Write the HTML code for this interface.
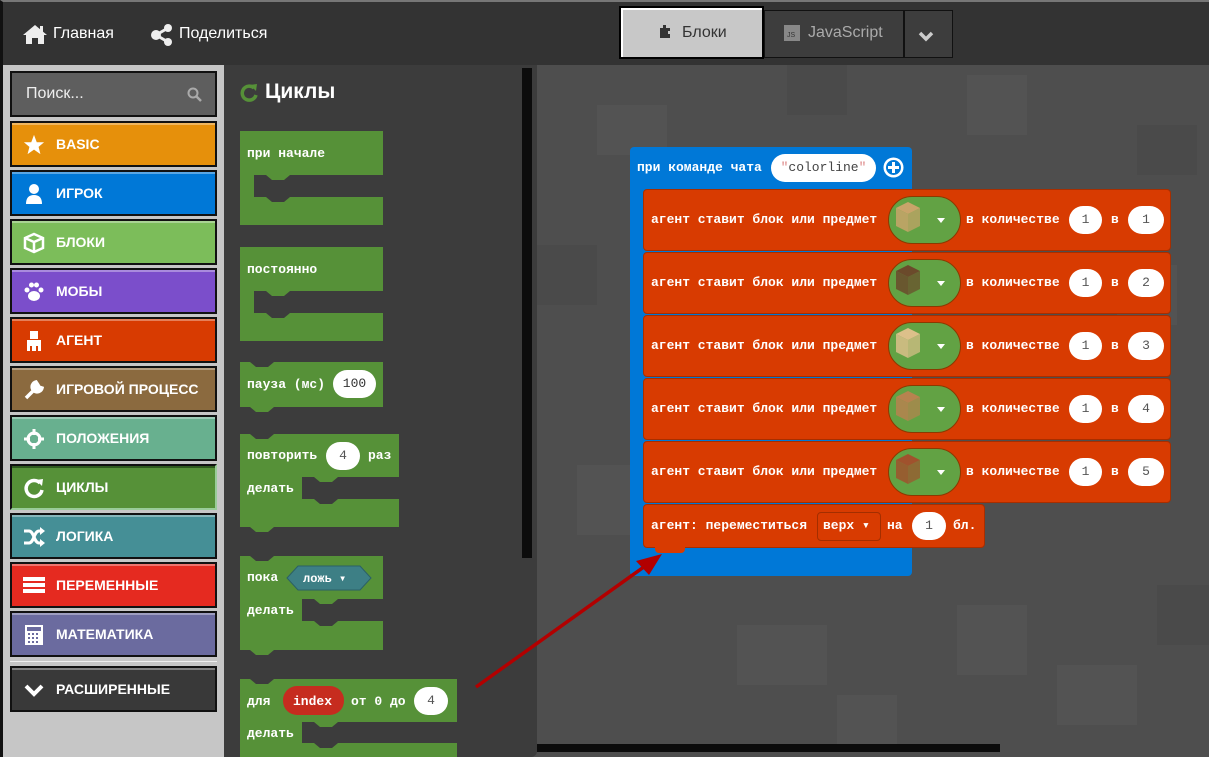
<!DOCTYPE html>
<html><head><meta charset="utf-8">
<style>
*{box-sizing:border-box;margin:0;padding:0}
body{width:1209px;height:757px;overflow:hidden;background:#4e4e4e;font-family:"Liberation Sans",sans-serif;position:relative}
.abs{position:absolute}
#top{left:0;top:0;width:1209px;height:65px;background:#333;border-top:2px solid #777;border-left:3px solid #111}
.nav{color:#fff;font-size:16px;top:23px}
#side{left:0;top:65px;width:224px;height:692px;background:#c6c6c6;border-left:3px solid #111}
.cat{position:absolute;left:10px;width:207px;height:46px;border:2px solid #111;color:#fff;font-weight:bold;font-size:14px;line-height:42px;padding-left:44px;box-shadow:inset 0 2px 0 rgba(255,255,255,.35)}
.cat svg{position:absolute;left:11px;top:11px}
#fly{left:224px;top:65px;width:313px;height:692px;background:#3c3c3c;border-radius:0 0 6px 0}
.mono{font-family:"Liberation Mono",monospace;font-weight:bold;font-size:13px;color:#fff}
.row{position:absolute;left:643px;width:528px;height:62px;background:#d83b01;border:1px solid #a72e00;border-radius:4px}
.row .t{position:absolute;top:22px}
.pill{position:absolute;background:#fff;border-radius:14px;color:#555;text-align:center;font-family:"Liberation Mono",monospace;font-size:13px}
.gp{position:absolute;left:244px;top:6px;width:73px;height:48px;background:#62a244;border:1px solid #8a3a00;border-radius:24px}
</style></head><body>

<svg class="abs" style="left:537px;top:65px" width="672" height="692">
<g fill="#535353">
<rect x="60" y="40" width="70" height="50"/><rect x="430" y="10" width="60" height="60"/><rect x="200" y="560" width="90" height="60"/>
<rect x="420" y="540" width="70" height="70"/><rect x="580" y="200" width="60" height="60"/><rect x="40" y="400" width="60" height="70"/>
<rect x="520" y="600" width="80" height="60"/><rect x="300" y="630" width="60" height="50"/></g>
<g fill="#4a4a4a"><rect x="0" y="180" width="60" height="60"/><rect x="620" y="520" width="52" height="60"/><rect x="250" y="0" width="60" height="50"/><rect x="600" y="60" width="60" height="50"/></g>
</svg>

<div id="top" class="abs">
  <svg class="abs" style="left:19px;top:21px" width="26" height="22" viewBox="0 0 26 22"><path d="M13 2 L1 12 L4 12 L4 21 L10 21 L10 15 L16 15 L16 21 L22 21 L22 12 L25 12 Z" fill="#eee"/><rect x="18" y="3" width="3" height="6" fill="#eee"/></svg>
  <div class="abs nav" style="left:50px">Главная</div>
  <svg class="abs" style="left:147px;top:22px" width="24" height="22" viewBox="0 0 24 22"><circle cx="18" cy="4" r="4" fill="#eee"/><circle cx="6" cy="11" r="5" fill="#eee"/><circle cx="18" cy="18" r="4" fill="#eee"/><path d="M6 11 L18 4 M6 11 L18 18" stroke="#eee" stroke-width="3"/></svg>
  <div class="abs nav" style="left:176px">Поделиться</div>
  <div class="abs" style="left:616px;top:4px;width:145px;height:53px;background:#c8c8c8;border:2px solid #000;box-shadow:inset 2px 2px 0 #fff"></div>
  <svg class="abs" style="left:656px;top:23px" width="12" height="13"><path d="M1 3 h3 v-3 h3 v3 h4 v3 h-2 v3 h2 v4 h-10z" fill="#333"/></svg>
  <div class="abs" style="left:679px;top:22px;font-size:16px;color:#333">Блоки</div>
  <div class="abs" style="left:761px;top:8px;width:140px;height:48px;background:#3d3d3d;border:1px solid #111"></div>
  <div class="abs" style="left:781px;top:23px;width:16px;height:16px;background:#888;color:#333;font-size:7px;padding:7px 0 0 3px">JS</div>
  <div class="abs" style="left:805px;top:22px;font-size:16px;color:#aaa">JavaScript</div>
  <div class="abs" style="left:901px;top:8px;width:49px;height:48px;background:#3d3d3d;border:1px solid #111"></div>
  <svg class="abs" style="left:915px;top:29px" width="16" height="11"><path d="M2 2 L8 8 L14 2" stroke="#ccc" stroke-width="3.5" fill="none"/></svg>
</div>

<div id="side" class="abs">
  <div class="abs" style="left:7px;top:6px;width:207px;height:46px;background:#5e5e5e;border:2px solid #111;color:#eee;font-size:16px;line-height:42px;padding-left:14px">Поиск...</div>
  <svg class="abs" style="left:184px;top:22px" width="16" height="16"><circle cx="6" cy="6" r="4.5" stroke="#aaa" stroke-width="2" fill="none"/><path d="M9.5 9.5 L14 14" stroke="#aaa" stroke-width="2.5"/></svg>
</div>
<div class="cat" style="top:121px;background:#e6900b">BASIC<svg width="22" height="22" viewBox="0 0 24 24"><path d="M12 1 L15 9 L23 9 L17 14 L19 22 L12 17 L5 22 L7 14 L1 9 L9 9Z" fill="#fff"/></svg></div>
<div class="cat" style="top:170px;background:#0078d7">ИГРОК<svg width="22" height="22"><circle cx="11" cy="6" r="5" fill="#fff"/><path d="M3 21 Q3 12 11 12 Q19 12 19 21Z" fill="#fff"/></svg></div>
<div class="cat" style="top:219px;background:#7cbd5a">БЛОКИ<svg width="22" height="22"><path d="M11 2 L20 6 L20 16 L11 20 L2 16 L2 6Z M2 6 L11 10 L20 6 M11 10 L11 20" stroke="#fff" stroke-width="2.5" fill="none"/></svg></div>
<div class="cat" style="top:268px;background:#7b4ecb">МОБЫ<svg width="22" height="22"><circle cx="4" cy="9" r="2.5" fill="#fff"/><circle cx="8.5" cy="4" r="2.5" fill="#fff"/><circle cx="13.5" cy="4" r="2.5" fill="#fff"/><circle cx="18" cy="9" r="2.5" fill="#fff"/><ellipse cx="11" cy="15" rx="6" ry="5" fill="#fff"/></svg></div>
<div class="cat" style="top:317px;background:#d83b01">АГЕНТ<svg width="22" height="22"><rect x="7" y="1" width="8" height="8" fill="#fff"/><rect x="4" y="10" width="14" height="6" fill="#fff"/><rect x="4" y="16" width="3" height="5" fill="#fff"/><rect x="15" y="16" width="3" height="5" fill="#fff"/><rect x="9" y="16" width="4" height="5" fill="#fff"/></svg></div>
<div class="cat" style="top:366px;background:#8b6a3f">ИГРОВОЙ ПРОЦЕСС<svg width="22" height="22"><path d="M3 19 L12 10 M13 3 a5 5 0 1 0 6 6 l-3 -1 l-1 -2 Z" stroke="#fff" stroke-width="3.5" fill="#fff"/></svg></div>
<div class="cat" style="top:415px;background:#68b08f">ПОЛОЖЕНИЯ<svg width="22" height="22"><circle cx="11" cy="11" r="6" stroke="#fff" stroke-width="3" fill="none"/><path d="M11 1 V7 M11 15 V21 M1 11 H7 M15 11 H21" stroke="#fff" stroke-width="3"/></svg></div>
<div class="cat" style="top:464px;background:#569138;box-shadow:inset 0 2px 0 #2f5a1e;border-right-color:#9c9;border-bottom-color:#9c9">ЦИКЛЫ<svg width="22" height="22"><path d="M17 6 A8 8 0 1 0 19 13" stroke="#fff" stroke-width="3.5" fill="none"/><path d="M13 3 L20 2 L19 9Z" fill="#fff"/></svg></div>
<div class="cat" style="top:513px;background:#458f96">ЛОГИКА<svg width="22" height="22"><path d="M1 5 H6 C11 5 11 17 16 17 H19 M1 17 H6 C11 17 11 5 16 5 H19" stroke="#fff" stroke-width="3" fill="none"/><path d="M17 1 L22 5 L17 9Z M17 13 L22 17 L17 21Z" fill="#fff"/></svg></div>
<div class="cat" style="top:562px;background:#e52a20">ПЕРЕМЕННЫЕ<svg width="22" height="22"><rect x="0" y="2" width="22" height="4" fill="#fff"/><rect x="0" y="8" width="22" height="4" fill="#fff"/><rect x="0" y="14" width="22" height="4" fill="#fff"/></svg></div>
<div class="cat" style="top:611px;background:#6b6b9f">МАТЕМАТИКА<svg width="22" height="22"><rect x="2" y="1" width="18" height="20" fill="#fff"/><rect x="4" y="3" width="14" height="4" fill="#6b6b9f"/><g fill="#6b6b9f"><rect x="5" y="9" width="2" height="2"/><rect x="9" y="9" width="2" height="2"/><rect x="13" y="9" width="2" height="2"/><rect x="5" y="13" width="2" height="2"/><rect x="9" y="13" width="2" height="2"/><rect x="13" y="13" width="2" height="2"/><rect x="5" y="17" width="2" height="2"/><rect x="9" y="17" width="2" height="2"/><rect x="13" y="17" width="2" height="2"/></g></svg></div>
<div class="abs" style="left:10px;top:661px;width:207px;height:1px;background:#eee"></div>
<div class="cat" style="top:666px;background:#393939">РАСШИРЕННЫЕ<svg width="22" height="22"><path d="M3 7 L11 15 L19 7" stroke="#fff" stroke-width="4" fill="none"/></svg></div>

<div id="fly" class="abs"></div>
<svg class="abs" style="left:240px;top:83px" width="20" height="20"><path d="M14 5 A7 7 0 1 0 16 12" stroke="#569138" stroke-width="3.5" fill="none"/><path d="M10 2 L17 1 L16 8Z" fill="#569138"/></svg>
<div class="abs" style="left:265px;top:80px;color:#fff;font-weight:bold;font-size:21px">Циклы</div>
<div class="abs" style="left:522px;top:68px;width:10px;height:490px;background:#0c0c0c"></div>
<div class="abs" style="left:537px;top:744px;width:463px;height:8px;background:#0c0c0c"></div>

<svg class="abs" style="left:0;top:0" width="540" height="757">
<g fill="#569138">
 <path d="M240 131 H383 V175 H290 l-6 5 h-12 l-6 -5 H254 V197 H266 l6 5 h12 l6 -5 H383 V225 H240 Z"/>
 <path d="M240 247 H383 V291 H290 l-6 5 h-12 l-6 -5 H254 V313 H266 l6 5 h12 l6 -5 H383 V341 H240 Z"/>
 <path d="M240 362 H250 l6 5 h12 l6 -5 H383 V407 H274 l-6 5 h-12 l-6 -5 H240 Z"/>
 <path d="M240 434 H250 l6 5 h12 l6 -5 H399 V477 H338 l-6 5 h-12 l-6 -5 H302 V499 H314 l6 5 h12 l6 -5 H399 V527 H274 l-6 5 h-12 l-6 -5 H240 Z"/>
 <path d="M240 556 H250 l6 5 h12 l6 -5 H383 V599 H338 l-6 5 h-12 l-6 -5 H302 V621 H314 l6 5 h12 l6 -5 H383 V650 H274 l-6 5 h-12 l-6 -5 H240 Z"/>
 <path d="M240 679 H250 l6 5 h12 l6 -5 H457 V722 H338 l-6 5 h-12 l-6 -5 H302 V743 H314 l6 5 h12 l6 -5 H457 V757 H240 Z"/>
</g>
<polygon points="287,578 298,566 360,566 371,578 360,590 298,590" fill="#3d7f85" stroke="#2b6066"/>
<rect x="283" y="686" width="61" height="29" rx="14" fill="#c62c1f"/>
</svg>
<div class="abs mono" style="left:247px;top:146px">при начале</div>
<div class="abs mono" style="left:247px;top:262px">постоянно</div>
<div class="abs mono" style="left:247px;top:377px">пауза (мс)</div>
<div class="pill" style="left:333px;top:370px;width:43px;height:28px;line-height:28px;color:#333">100</div>
<div class="abs mono" style="left:247px;top:448px">повторить</div>
<div class="pill" style="left:326px;top:442px;width:34px;height:28px;line-height:28px">4</div>
<div class="abs mono" style="left:368px;top:448px">раз</div>
<div class="abs mono" style="left:247px;top:481px">делать</div>
<div class="abs mono" style="left:247px;top:570px">пока</div>
<div class="abs mono" style="left:303px;top:571px;font-size:12px">ложь ▾</div>
<div class="abs mono" style="left:247px;top:603px">делать</div>
<div class="abs mono" style="left:247px;top:694px">для</div>
<div class="abs mono" style="left:293px;top:694px">index</div>
<div class="abs mono" style="left:351px;top:694px">от 0 до</div>
<div class="pill" style="left:414px;top:687px;width:34px;height:28px;line-height:28px">4</div>
<div class="abs mono" style="left:247px;top:726px">делать</div>

<div class="abs" style="left:630px;top:147px;width:282px;height:429px;background:#0078d7;border-radius:4px"></div>
<div class="abs mono" style="left:637px;top:160px">при команде чата</div>
<div class="pill" style="left:771px;top:154px;width:105px;height:28px;line-height:27px;color:#444"><span style="color:#d88">"</span>colorline<span style="color:#d88">"</span></div>
<svg class="abs" style="left:882px;top:156px" width="23" height="23"><circle cx="11.5" cy="11.5" r="10" fill="#fff"/><circle cx="11.5" cy="11.5" r="7.5" fill="#0078d7"/><path d="M11.5 6 V17 M6 11.5 H17" stroke="#fff" stroke-width="3"/></svg>

<div class="row" style="top:189px"><div class="t mono" style="left:7px">агент ставит блок или предмет</div><div class="gp"></div><div class="t mono" style="left:322px">в количестве</div><div class="pill" style="left:425px;top:16px;width:33px;height:28px;line-height:28px">1</div><div class="t mono" style="left:467px">в</div><div class="pill" style="left:484px;top:16px;width:36px;height:28px;line-height:28px">1</div></div>
<div class="row" style="top:252px"><div class="t mono" style="left:7px">агент ставит блок или предмет</div><div class="gp"></div><div class="t mono" style="left:322px">в количестве</div><div class="pill" style="left:425px;top:16px;width:33px;height:28px;line-height:28px">1</div><div class="t mono" style="left:467px">в</div><div class="pill" style="left:484px;top:16px;width:36px;height:28px;line-height:28px">2</div></div>
<div class="row" style="top:315px"><div class="t mono" style="left:7px">агент ставит блок или предмет</div><div class="gp"></div><div class="t mono" style="left:322px">в количестве</div><div class="pill" style="left:425px;top:16px;width:33px;height:28px;line-height:28px">1</div><div class="t mono" style="left:467px">в</div><div class="pill" style="left:484px;top:16px;width:36px;height:28px;line-height:28px">3</div></div>
<div class="row" style="top:378px"><div class="t mono" style="left:7px">агент ставит блок или предмет</div><div class="gp"></div><div class="t mono" style="left:322px">в количестве</div><div class="pill" style="left:425px;top:16px;width:33px;height:28px;line-height:28px">1</div><div class="t mono" style="left:467px">в</div><div class="pill" style="left:484px;top:16px;width:36px;height:28px;line-height:28px">4</div></div>
<div class="row" style="top:441px"><div class="t mono" style="left:7px">агент ставит блок или предмет</div><div class="gp"></div><div class="t mono" style="left:322px">в количестве</div><div class="pill" style="left:425px;top:16px;width:33px;height:28px;line-height:28px">1</div><div class="t mono" style="left:467px">в</div><div class="pill" style="left:484px;top:16px;width:36px;height:28px;line-height:28px">5</div></div>

<svg class="abs" style="left:888px;top:189px" width="80" height="320">
<defs>
<g id="cube"><polygon points="8,12 20,6 32,12 20,18" /><polygon points="8,12 20,18 20,36 8,30" opacity=".85"/><polygon points="20,18 32,12 32,30 20,36" opacity=".7"/></g>
</defs>
<g fill="#c9a46a"><use href="#cube" y="7"/></g>
<g fill="#6b4a2b"><use href="#cube" y="70"/></g>
<g fill="#dcc08a"><use href="#cube" y="133"/></g>
<g fill="#b7834f"><use href="#cube" y="196"/></g>
<g fill="#a0522d"><use href="#cube" y="259"/></g>
<g fill="#fff"><polygon points="49,29 57,29 53,34"/><polygon points="49,92 57,92 53,97"/><polygon points="49,155 57,155 53,160"/><polygon points="49,218 57,218 53,223"/><polygon points="49,281 57,281 53,286"/></g>
</svg>

<div class="abs" style="left:643px;top:504px;width:342px;height:44px;background:#d83b01;border:1px solid #a72e00;border-radius:4px"></div>
<div class="abs" style="left:655px;top:547px;width:30px;height:6px;background:#d83b01;border-radius:0 0 4px 4px"></div>
<div class="abs mono" style="left:651px;top:518px">агент: переместиться</div>
<div class="abs" style="left:817px;top:512px;width:64px;height:29px;border:1px solid #a32e00;border-radius:4px"></div>
<div class="abs mono" style="left:823px;top:518px">верх ▾</div>
<div class="abs mono" style="left:887px;top:518px">на</div>
<div class="pill" style="left:912px;top:512px;width:34px;height:28px;line-height:28px">1</div>
<div class="abs mono" style="left:953px;top:518px">бл.</div>

<svg class="abs" style="left:0;top:0;pointer-events:none" width="1209" height="757">
<line x1="476" y1="687" x2="648" y2="564" stroke="#b20000" stroke-width="3.5"/>
<polygon points="662,554 636,561 649,575" fill="#b20000"/>
</svg>
</body></html>
